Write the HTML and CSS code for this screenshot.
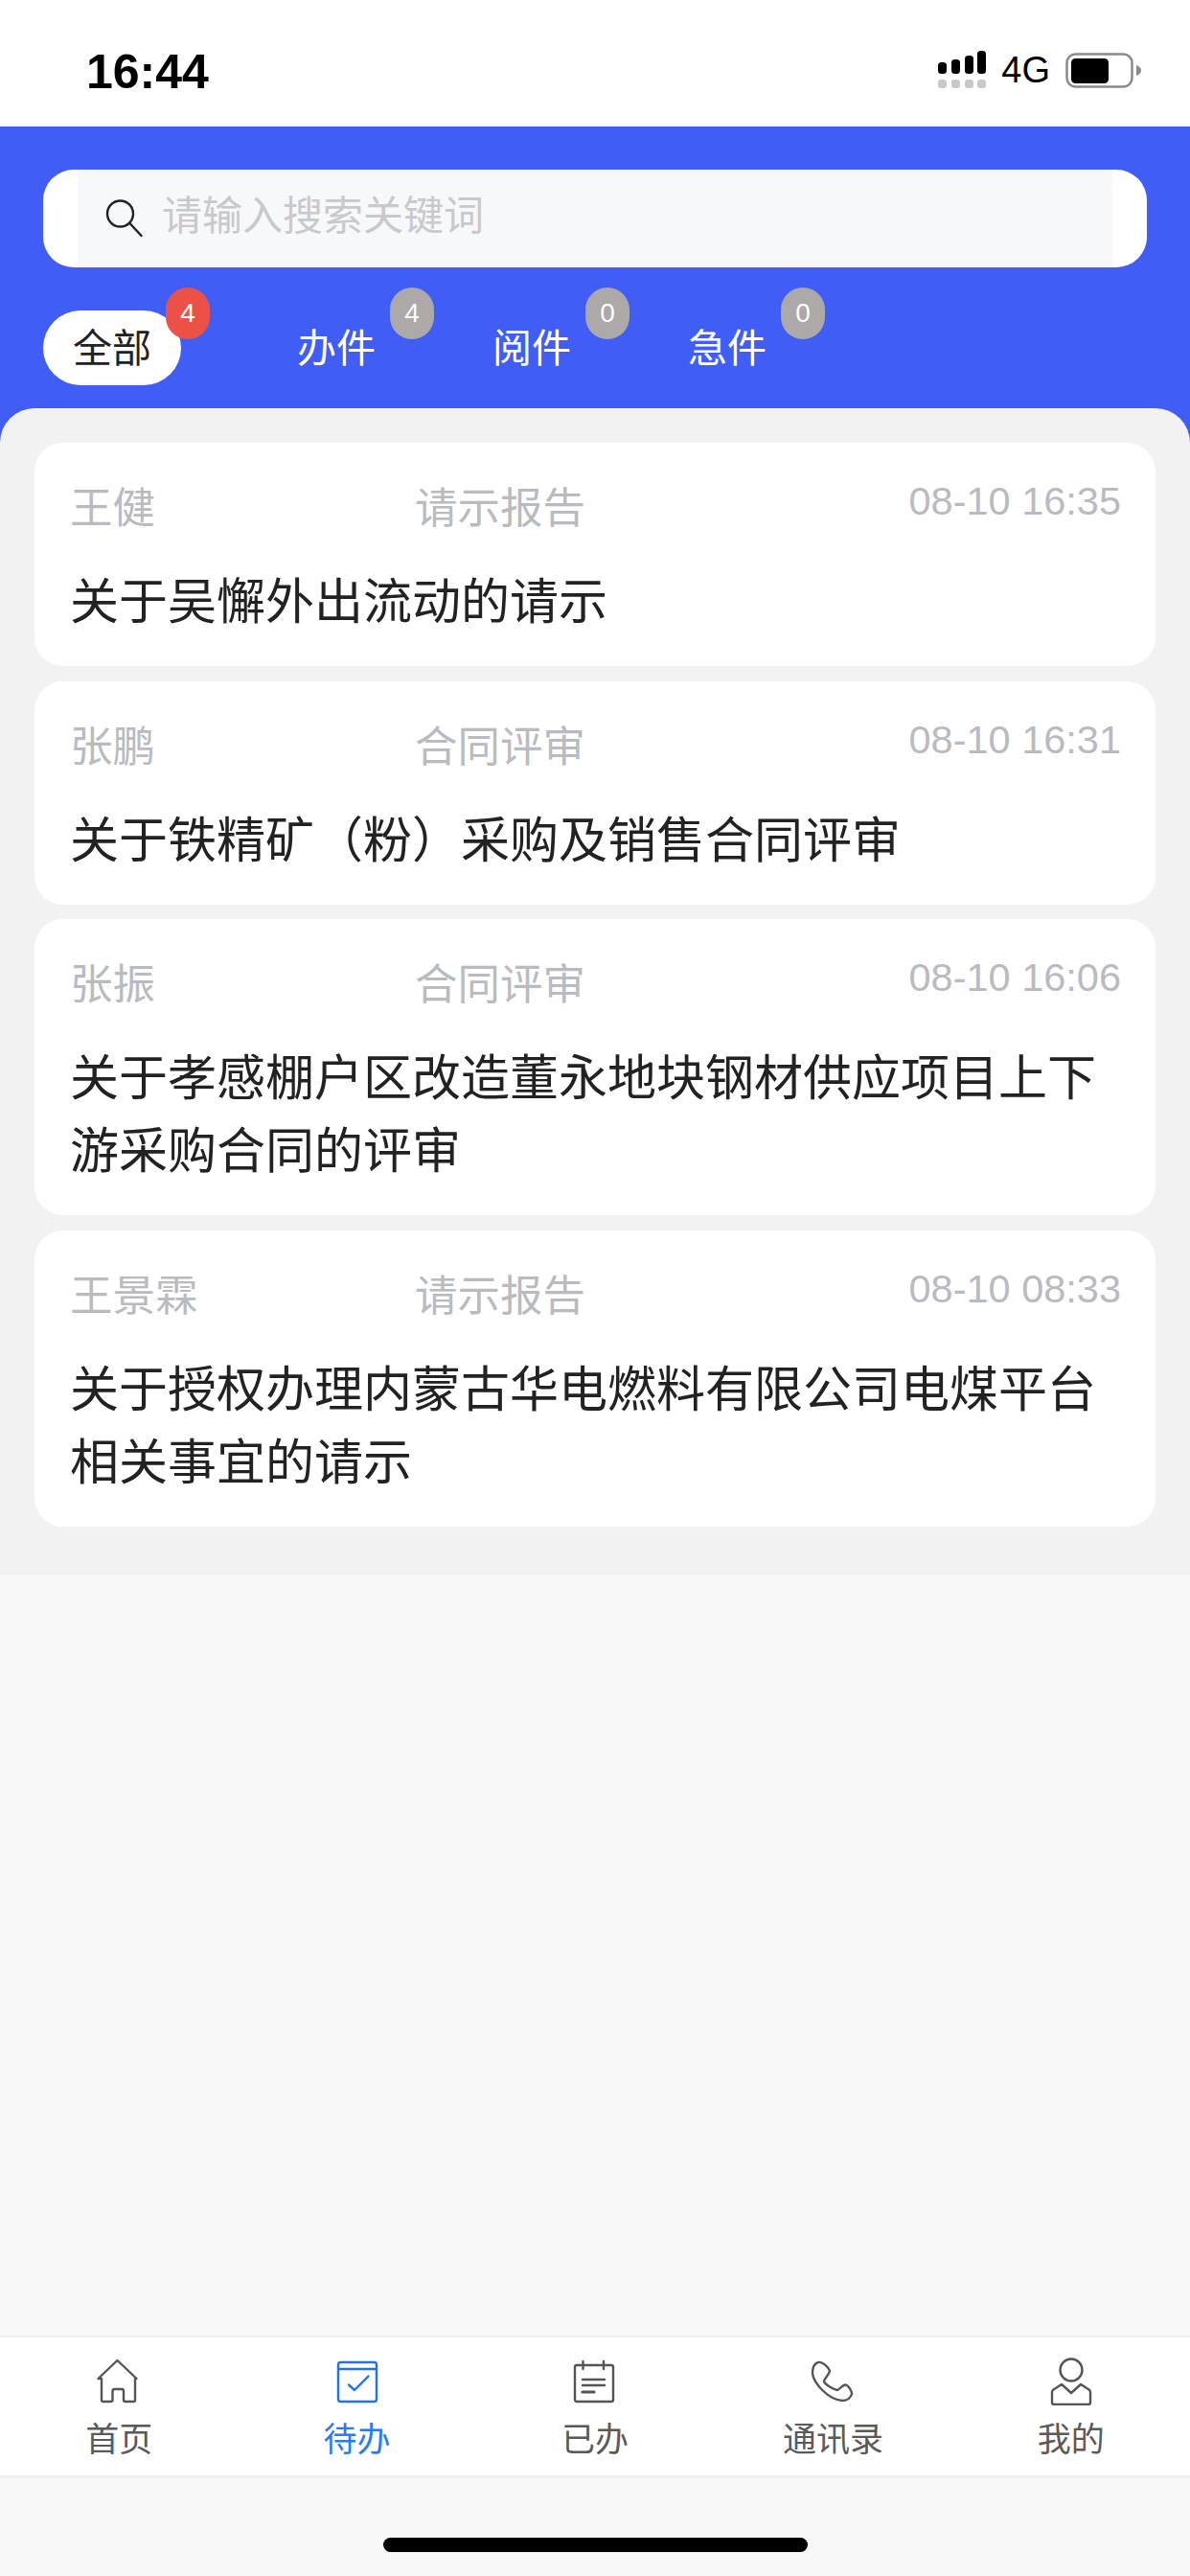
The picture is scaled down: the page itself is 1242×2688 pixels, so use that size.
FILE: index.html
```html
<!DOCTYPE html>
<html lang="zh-CN">
<head>
    <meta charset="UTF-8">
    <meta name="viewport" content="width=device-width, initial-scale=1.0">
    <title>待办</title>
    <link rel="stylesheet" href="styles.css">
</head>
<body>
    <div class="page">
        <div class="status-bar">
            <span class="status-time">16:44</span>
            <div class="status-icons">
                <svg class="signal" width="50" height="39" viewBox="0 0 50 39">
                    <rect x="0" y="12" width="9" height="12" rx="3.5"/>
                    <rect x="14" y="9" width="9" height="15" rx="3.5"/>
                    <rect x="28" y="5" width="9" height="19" rx="3.5"/>
                    <rect x="41" y="0" width="9" height="24" rx="3.5"/>
                    <rect class="signal-off" x="0" y="30" width="9" height="9" rx="3"/>
                    <rect class="signal-off" x="14" y="30" width="9" height="9" rx="3"/>
                    <rect class="signal-off" x="28" y="30" width="9" height="9" rx="3"/>
                    <rect class="signal-off" x="41" y="30" width="9" height="9" rx="3"/>
                </svg>
                <span class="status-net">4G</span>
                <svg class="battery" width="79" height="37" viewBox="0 0 79 37">
                    <rect x="1.5" y="1.5" width="68" height="34" rx="9" fill="#fff" stroke="#8a8a8a" stroke-width="2.5"/>
                    <rect x="6" y="6" width="39" height="26" rx="4.5" fill="#000"/>
                    <path d="M74 13c3 1 5 3 5 5.500s-2 4.500-5 5.500z" fill="#8a8a8a"/>
                </svg>
            </div>
        </div>

        <header class="header">
            <div class="search">
                <div class="search-inner">
                    <svg width="40" height="40" viewBox="0 0 40 40" fill="none" stroke="#222" stroke-width="2.400" stroke-linecap="round">
                        <circle cx="15.500" cy="15" r="13.500"/>
                        <path d="M25.500 25l12 13"/>
                    </svg>
                    <span class="search-hint">请输入搜索关键词</span>
                </div>
            </div>
            <nav class="tabs">
                <div class="tab tab-active">全部<span class="badge badge-red">4</span></div>
                <div class="tab">办件<span class="badge">4</span></div>
                <div class="tab">阅件<span class="badge">0</span></div>
                <div class="tab">急件<span class="badge">0</span></div>
            </nav>
        </header>

        <main class="list">
            <div class="card">
                <div class="card-top">
                    <span class="card-name">王健</span>
                    <span class="card-type">请示报告</span>
                    <span class="card-date">08-10 16:35</span>
                </div>
                <p class="card-title">关于吴懈外出流动的请示</p>
            </div>
            <div class="card">
                <div class="card-top">
                    <span class="card-name">张鹏</span>
                    <span class="card-type">合同评审</span>
                    <span class="card-date">08-10 16:31</span>
                </div>
                <p class="card-title">关于铁精矿（粉）采购及销售合同评审</p>
            </div>
            <div class="card">
                <div class="card-top">
                    <span class="card-name">张振</span>
                    <span class="card-type">合同评审</span>
                    <span class="card-date">08-10 16:06</span>
                </div>
                <p class="card-title">关于孝感棚户区改造董永地块钢材供应项目上下游采购合同的评审</p>
            </div>
            <div class="card">
                <div class="card-top">
                    <span class="card-name">王景霖</span>
                    <span class="card-type">请示报告</span>
                    <span class="card-date">08-10 08:33</span>
                </div>
                <p class="card-title">关于授权办理内蒙古华电燃料有限公司电煤平台相关事宜的请示</p>
            </div>
        </main>

        <div class="spacer"></div>

        <footer class="tabbar">
            <div class="tabbar-item">
                <svg class="tabbar-icon" width="48" height="50" viewBox="0 0 48 50">
                    <path d="M6 22H2.500L22.500 3l20 19H41v22.500a1.500 1.500 0 0 1-1.500 1.500H31a2 2 0 0 1-2-2V35a2 2 0 0 0-2-2h-7.500a2 2 0 0 0-2 2v9a2 2 0 0 1-2 2H7.500A1.500 1.500 0 0 1 6 44.500z"/>
                </svg>
                <span>首页</span>
            </div>
            <div class="tabbar-item tabbar-active">
                <svg class="tabbar-icon" width="48" height="50" viewBox="0 0 48 50">
                    <rect x="4" y="5" width="40" height="41" rx="2.500"/>
                    <path d="M4 12h40M15 28.500l6 5.500L35.500 19.500"/>
                </svg>
                <span>待办</span>
            </div>
            <div class="tabbar-item">
                <svg class="tabbar-icon" width="48" height="50" viewBox="0 0 48 50">
                    <rect x="3" y="8" width="40" height="38" rx="2"/>
                    <path d="M11.500 4v8M33 4v8M11 23h23M11 29h23"/>
                    <path class="icon-thick" d="M11 36h12"/>
                </svg>
                <span>已办</span>
            </div>
            <div class="tabbar-item">
                <svg class="tabbar-icon" width="48" height="50" viewBox="0 0 48 50">
                    <path d="M9 5C5 6 3 11 3 17c2 11 17 27 31 28 5 0 9-3 10-7 0-3-3-8-6-9.500-4-.5-6 4.500-9 5.500-5-1-13-6-14-9 0-3 5-6 6-11C20 10 13 4 9 5z"/>
                </svg>
                <span>通讯录</span>
            </div>
            <div class="tabbar-item">
                <svg class="tabbar-icon" width="48" height="50" viewBox="0 0 48 50">
                    <ellipse cx="24" cy="13" rx="11.500" ry="11.500"/>
                    <path d="M6 49h36a2 2 0 0 0 2-2V36a3 3 0 0 0-1.500-2.500L34 28l-10 9-10-9-8.500 5.500A3 3 0 0 0 4 36v11a2 2 0 0 0 2 2z"/>
                </svg>
                <span>我的</span>
            </div>
        </footer>

        <div class="home-area">
            <div class="home-bar"></div>
        </div>
    </div>
</body>
</html>
```

FILE: styles.css
```css
*, ::before, ::after {
    margin: 0;
    padding: 0;
    box-sizing: border-box;
}

body {
    background-color: #f8f8f8;
    font-family: "Noto Sans CJK SC", "Liberation Sans", sans-serif;
}

.page {
    width: 1242px;
    height: 2688px;
    display: flex;
    flex-direction: column;
    overflow: hidden;
}

/* status bar */
.status-bar {
    height: 132px;
    flex-shrink: 0;
    display: flex;
    justify-content: space-between;
    align-items: center;
    padding: 12px 51px 0 90px;
    background-color: #fff;
    font-family: "Liberation Sans", sans-serif;
    color: #000;
}

.status-time {
    margin-top: 5px;
    font-size: 50px;
    font-weight: 700;
    line-height: 60px;
}

.status-icons {
    display: flex;
    align-items: center;
    gap: 16px;
}

.signal rect {
    fill: #000;
}

.signal .signal-off {
    fill: #c9c9c9;
}

.status-net {
    margin-top: 2px;
    font-size: 38px;
    line-height: 40px;
}

.battery {
    margin-top: 3px;
}

/* blue header */
.header {
    height: 330px;
    flex-shrink: 0;
    padding: 45px 45px 0;
    background-color: #405ef5;
}

.search {
    height: 102px;
    padding: 0 36px;
    border-radius: 32px;
    background-color: #fff;
}

.search-inner {
    height: 100%;
    display: flex;
    align-items: center;
    gap: 19px;
    padding-left: 29px;
    background-color: #f7f8fa;
}

.search-hint {
    margin-bottom: 12px;
    font-size: 42px;
    line-height: 60px;
    color: #c8c9cc;
}

.tabs {
    display: flex;
    gap: 60px;
    margin-top: 45px;
}

.tab {
    position: relative;
    width: 144px;
    height: 78px;
    line-height: 72px;
    border-radius: 39px;
    text-align: center;
    font-size: 41px;
    color: #fff;
}

.tab-active {
    margin-right: 30px;
    background-color: #fff;
    color: #222;
}

.badge {
    position: absolute;
    top: -24px;
    right: -30px;
    width: 46px;
    height: 54px;
    line-height: 54px;
    border-radius: 23px;
    background-color: #aca9a8;
    font-family: "Liberation Sans", sans-serif;
    font-size: 28px;
    color: #fff;
}

.badge-red {
    background-color: #ec5148;
}

/* grey panel with the cards */
.list {
    flex-shrink: 0;
    display: flex;
    flex-direction: column;
    gap: 15.5px;
    margin-top: -36px;
    padding: 36px 36px 50.5px;
    border-radius: 36px 36px 0 0;
    background-color: #f2f2f2;
}

.card {
    padding: 36px 36px 33px 37px;
    border-radius: 30px;
    background-color: #fff;
}

.card-top {
    display: flex;
    align-items: flex-start;
    height: 64px;
    margin-bottom: 24px;
    font-size: 44.5px;
    line-height: 58px;
    color: #b9bbc0;
}

.card-name {
    width: 360px;
}

.card-date {
    margin-left: auto;
    font-family: "Liberation Sans", sans-serif;
    font-size: 41.5px;
    line-height: 50px;
}

.card-title {
    font-size: 51px;
    line-height: 76px;
    color: #222;
}

.spacer {
    flex: 1;
}

/* bottom navigation */
.tabbar {
    height: 149px;
    flex-shrink: 0;
    display: flex;
    border-top: 2px solid #eeeef3;
    border-bottom: 3px solid #efeff1;
    background-color: #fff;
}

.tabbar-item {
    flex: 1;
    display: flex;
    flex-direction: column;
    align-items: center;
    padding-top: 21px;
    font-size: 35px;
    line-height: 38px;
    color: #5a5a5a;
}

.tabbar-item span {
    margin-top: 14px;
}

.tabbar-icon {
    fill: none;
    stroke: #555;
    stroke-width: 2.400;
    stroke-linejoin: round;
    stroke-linecap: round;
}

.tabbar-icon .icon-thick {
    stroke-width: 3.200;
}

.tabbar-active {
    color: #2a7bf0;
}

.tabbar-active .tabbar-icon {
    stroke: #2272ee;
}

.home-area {
    height: 102px;
    flex-shrink: 0;
    display: flex;
    justify-content: center;
    padding-top: 62px;
}

.home-bar {
    width: 443px;
    height: 15px;
    border-radius: 8px;
    background-color: #000;
}
```
